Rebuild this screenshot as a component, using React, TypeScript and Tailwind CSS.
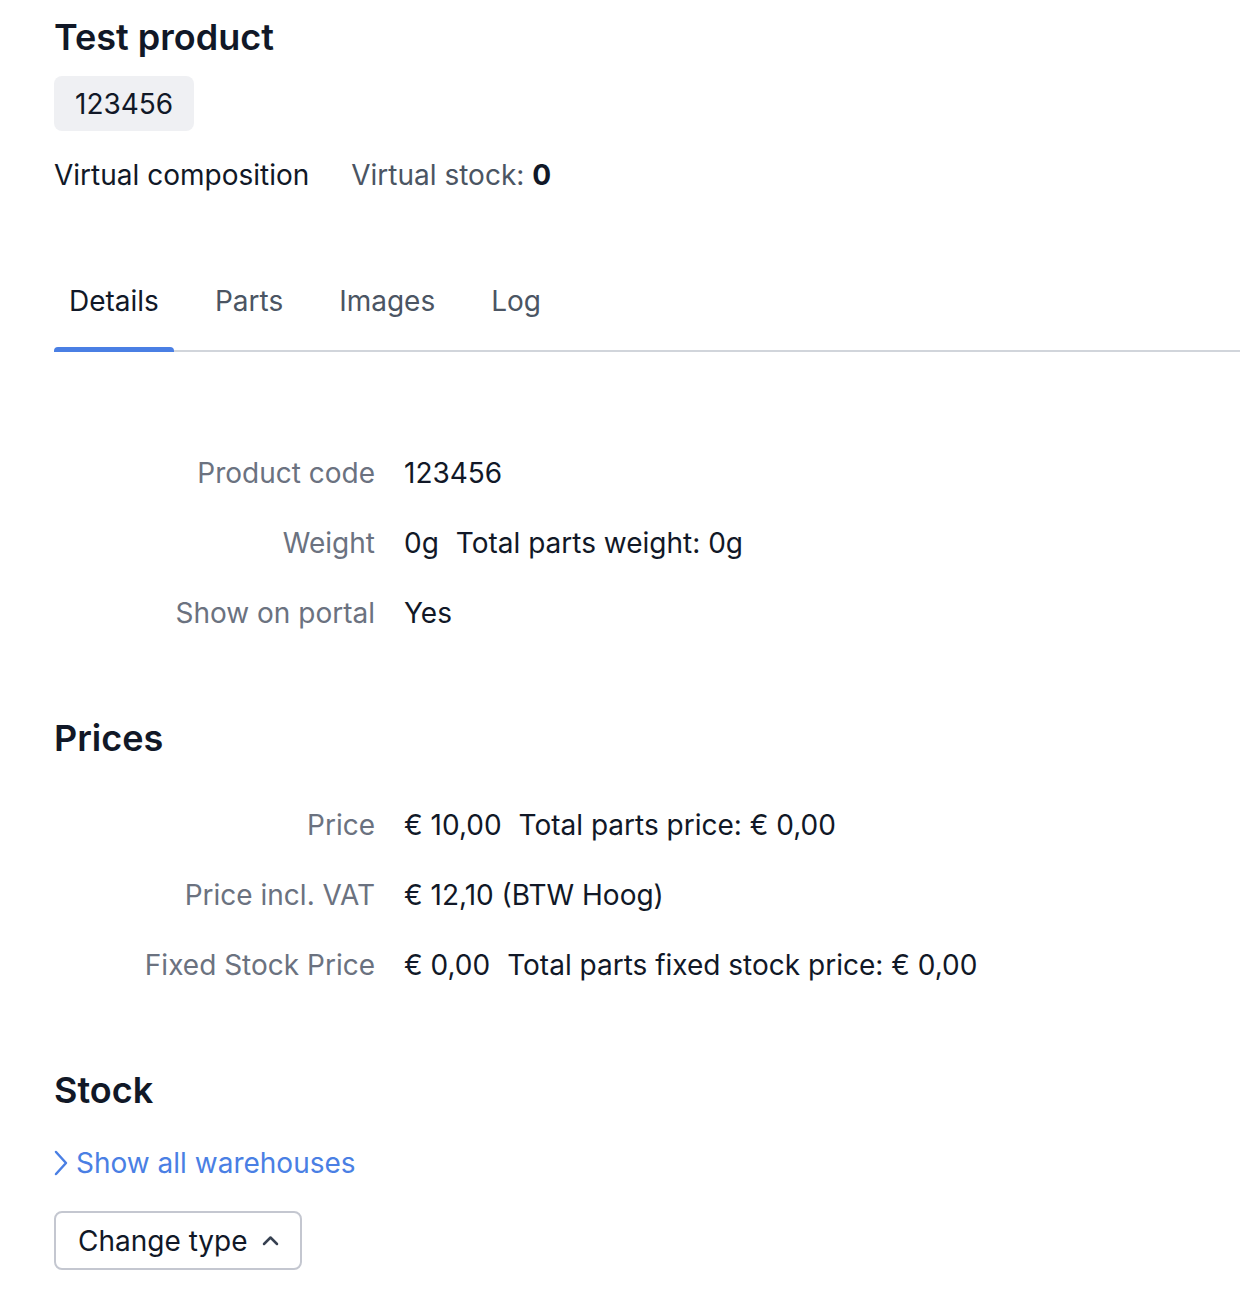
import { FC } from "react";

const Row: FC<{ label: string; children: React.ReactNode }> = ({ label, children }) => (
  <>
    <div className="text-right text-[#6b7280]">{label}</div>
    <div className="text-[#111827]">{children}</div>
  </>
);

const App: FC = () => {
  const tabs = ["Details", "Parts", "Images", "Log"];

  return (
    <div
      className="min-h-screen bg-white pl-[54px] pt-[14px] text-[28px] leading-[40px] text-[#111827]"
      style={{ fontFamily: "Inter, 'Noto Sans', sans-serif" }}
    >
      {/* Header */}
      <h1 className="text-[36px] font-semibold leading-[46px]">Test product</h1>
      <div className="mt-[16px] inline-flex h-[55px] items-center rounded-[8px] bg-[#eff0f3] px-[21px]">
        123456
      </div>
      <div className="mt-[24px] flex gap-[42px]">
        <span>Virtual composition</span>
        <span className="text-[#4b5563]">
          Virtual stock: <b className="font-bold text-[#111827]">0</b>
        </span>
      </div>

      {/* Tabs */}
      <div className="mt-[86px] flex gap-[26px] border-b-2 border-[#d1d5db]">
        {tabs.map((tab, i) => (
          <div
            key={tab}
            className={`relative px-[15px] pb-[29px] ${i === 0 ? "text-[#111827]" : "text-[#4b5563]"}`}
          >
            {tab}
            {i === 0 && (
              <div className="absolute -bottom-[2px] left-0 right-0 h-[5px] rounded-t-[4px] bg-[#4a7fe4]" />
            )}
          </div>
        ))}
      </div>

      {/* Details */}
      <div className="mt-[101px] grid grid-cols-[321px_1fr] gap-x-[29px] gap-y-[30px]">
        <Row label="Product code">123456</Row>
        <Row label="Weight">
          0g<span className="ml-[17px]">Total parts weight: 0g</span>
        </Row>
        <Row label="Show on portal">Yes</Row>
      </div>

      {/* Prices */}
      <h2 className="mt-[82px] text-[36px] font-semibold leading-[46px]">Prices</h2>
      <div className="mt-[44px] grid grid-cols-[321px_1fr] gap-x-[29px] gap-y-[30px]">
        <Row label="Price">
          € 10,00<span className="ml-[17px]">Total parts price: € 0,00</span>
        </Row>
        <Row label="Price incl. VAT">€ 12,10 (BTW Hoog)</Row>
        <Row label="Fixed Stock Price">
          € 0,00<span className="ml-[17px]">Total parts fixed stock price: € 0,00</span>
        </Row>
      </div>

      {/* Stock */}
      <h2 className="mt-[82px] text-[36px] font-semibold leading-[46px]">Stock</h2>
      <a href="#" className="mt-[30px] flex items-center gap-[8px] text-[#4a7fe4]">
        <svg width="14" height="26" viewBox="0 0 14 26" fill="none" stroke="currentColor" strokeWidth="2.5" strokeLinecap="round" strokeLinejoin="round">
          <path d="M2 2l10 11L2 24" />
        </svg>
        Show all warehouses
      </a>
      <button className="mt-[28px] flex h-[59px] items-center gap-[14px] rounded-[8px] border-2 border-[#c4c7d0] bg-white pl-[22px] pr-[21px] text-[#111827]">
        Change type
        <svg width="17" height="11" viewBox="0 0 17 11" fill="none" stroke="#374151" strokeWidth="2.5" strokeLinecap="round" strokeLinejoin="round">
          <path d="M2 9l6.5-6.5L15 9" />
        </svg>
      </button>
    </div>
  );
};

export default App;
